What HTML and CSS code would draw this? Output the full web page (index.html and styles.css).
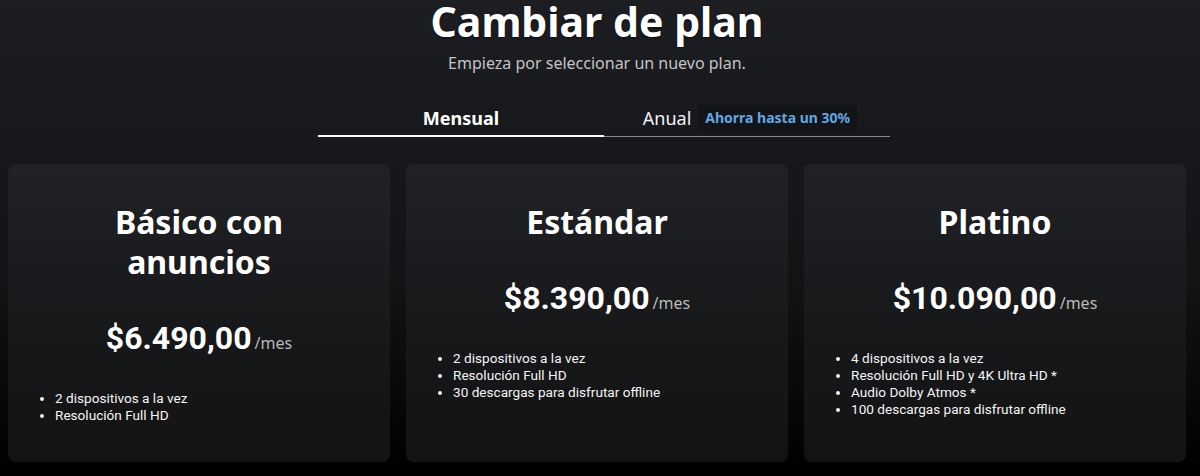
FILE: index.html
```html
<!DOCTYPE html>
<html lang="es">
<head>
    <meta charset="UTF-8">
    <meta name="viewport" content="width=device-width, initial-scale=1.0">
    <title>Cambiar de plan</title>
    <link rel="stylesheet" href="styles.css">
</head>
<body>
    <div class="page">
        <h1 class="title">Cambiar de plan</h1>
        <p class="subtitle">Empieza por seleccionar un nuevo plan.</p>

        <div class="tabs">
            <div class="tab active">Mensual</div>
            <div class="tab">
                <span class="tabName">Anual</span>
                <span class="badge">Ahorra hasta un 30%</span>
            </div>
        </div>

        <div class="plans">
            <div class="card">
                <h2 class="planName">Básico con<br>anuncios</h2>
                <div class="price"><span class="amount">$6.490,00</span><span class="per">/mes</span></div>
                <ul class="features">
                    <li>2 dispositivos a la vez</li>
                    <li>Resolución Full HD</li>
                </ul>
            </div>
            <div class="card">
                <h2 class="planName">Estándar</h2>
                <div class="price"><span class="amount">$8.390,00</span><span class="per">/mes</span></div>
                <ul class="features">
                    <li>2 dispositivos a la vez</li>
                    <li>Resolución Full HD</li>
                    <li>30 descargas para disfrutar offline</li>
                </ul>
            </div>
            <div class="card">
                <h2 class="planName">Platino</h2>
                <div class="price"><span class="amount">$10.090,00</span><span class="per">/mes</span></div>
                <ul class="features">
                    <li>4 dispositivos a la vez</li>
                    <li>Resolución Full HD y 4K Ultra HD *</li>
                    <li>Audio Dolby Atmos *</li>
                    <li>100 descargas para disfrutar offline</li>
                </ul>
            </div>
        </div>
    </div>
</body>
</html>
```

FILE: styles.css
```css
html, body {
    margin: 0;
    height: 100%;
}
body {
    background: linear-gradient(180deg, #1c1e22 0%, #121315 60%, #000 100%);
    color: #fff;
    font-family: "Noto Sans", "Open Sans", sans-serif;
    overflow: hidden;
}
.page {
    padding: 0 14px 0 8px;
}
.title {
    margin: 0;
    font-size: 41px;
    line-height: 42px;
    font-weight: 700;
    text-align: center;
    text-shadow: 0 1px 2px rgba(0, 0, 0, 0.6);
}
.subtitle {
    margin: 11px 0 0;
    font-size: 16px;
    line-height: 20px;
    color: #c4c4c4;
    text-align: center;
}

.tabs {
    width: 572px;
    margin: 27px 0 0 310px;
    display: flex;
}
.tab {
    flex: 1;
    display: flex;
    justify-content: center;
    align-items: center;
    gap: 7px;
    height: 36px;
    border-bottom: 1px solid #8a8a8a;
    font-size: 18px;
}
.tab.active {
    border-bottom: 2px solid #fff;
    font-weight: 700;
    height: 35px;
}
.tabName {
    margin-left: 6px;
    color: #f2f2f2;
}
.badge {
    background: #131417;
    color: #5fa8e3;
    font-size: 14px;
    font-weight: 700;
    padding: 3px 7px;
    line-height: 20px;
}

.plans {
    margin-top: 27px;
    display: flex;
    gap: 16px;
}
.card {
    width: 382px;
    height: 298px;
    box-sizing: border-box;
    padding: 38px 27px 0;
    border-radius: 8px;
    background: linear-gradient(180deg, #202226 0%, #17181a 55%, #131313 100%);
}
.planName {
    margin: 0;
    font-size: 32px;
    line-height: 40px;
    font-weight: 700;
    text-align: center;
}
.price {
    margin-top: 36px;
    text-align: center;
    line-height: 40px;
}
.amount {
    font-family: Roboto, "Noto Sans", sans-serif;
    font-size: 32px;
    font-weight: 700;
}
.per {
    margin-left: 3px;
    font-size: 16px;
    color: #b9b9b9;
}
.features {
    margin: 27px 0 0;
    padding-left: 20px;
    font-family: Roboto, "Noto Sans", sans-serif;
    font-size: 13.6px;
    line-height: 17px;
    color: #f4f4f4;
}
```
